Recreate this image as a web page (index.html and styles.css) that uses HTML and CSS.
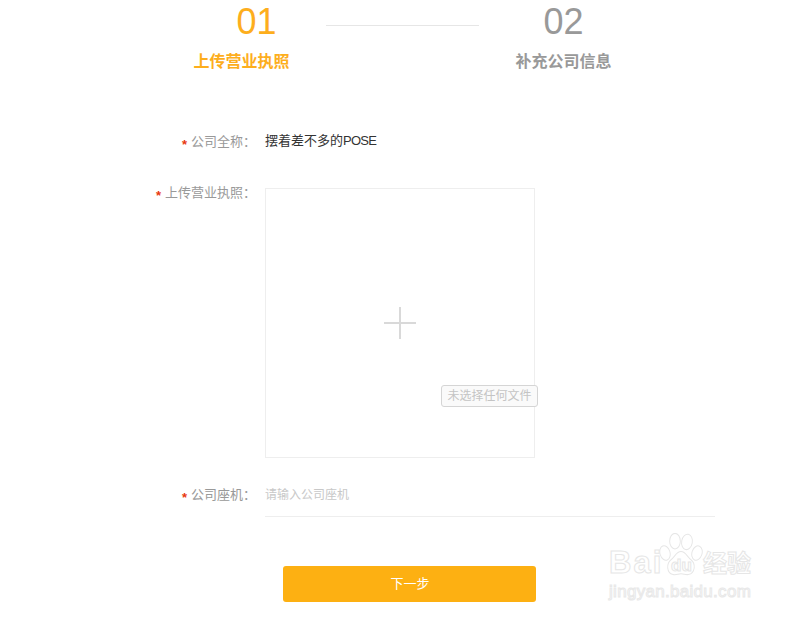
FILE: index.html
```html
<!DOCTYPE html>
<html lang="zh-CN">
<head>
<meta charset="utf-8">
<title>上传营业执照</title>
<link rel="stylesheet" href="styles.css">
</head>
<body>
<div class="page">
  <div class="steps">
    <div class="step step-active">
      <div class="step-num step-num-shift">01</div>
      <div class="step-name">上传营业执照</div>
    </div>
    <div class="step-line"></div>
    <div class="step">
      <div class="step-num">02</div>
      <div class="step-name">补充公司信息</div>
    </div>
  </div>
  <form class="form">
    <div class="row row-name">
      <div class="label"><span class="req">*</span>公司全称：</div>
      <div class="value">摆着差不多的<span class="latin">POSE</span></div>
    </div>
    <div class="row row-upload">
      <div class="label label-up"><span class="req">*</span>上传营业执照：</div>
      <div class="upload">
        <svg class="plus" width="32" height="32" viewBox="0 0 32 32"><path d="M16 0v32M0 16h32" stroke="#d9d9d9" stroke-width="2" fill="none"/></svg>
        <span class="file-btn">未选择任何文件</span>
      </div>
    </div>
    <div class="row row-phone">
      <div class="label"><span class="req">*</span>公司座机：</div>
      <div class="input">请输入公司座机</div>
    </div>
    <button type="button" class="next">下一步</button>
  </form>
</div>
<div class="watermark">
  <div class="wm-top">
    <span class="wm-text">Bai</span>
    <span class="wm-paw">
      <svg width="44" height="46" viewBox="0 0 66 62" preserveAspectRatio="none" fill="#fff" stroke="#e6e6e6" stroke-width="1.4">
        <ellipse cx="9" cy="27" rx="7.5" ry="10" transform="rotate(-20 9 27)"/>
        <ellipse cx="24" cy="11" rx="8" ry="10.5"/>
        <ellipse cx="42" cy="12" rx="8" ry="10.5" transform="rotate(12 42 12)"/>
        <ellipse cx="57" cy="27" rx="7.5" ry="10" transform="rotate(22 57 27)"/>
        <path d="M33 25c7 0 9 7 15 11 7 5 7 18-4 20-4 .6-7-1-11-1s-7 2-12 1c-10-2-10-15-3-20 6-4 8-11 15-11z"/>
      </svg>
      <span class="wm-du">du</span>
    </span>
    <span class="wm-text wm-cn">经验</span>
  </div>
  <div class="wm-url">jingyan.baidu.com</div>
</div>
</body>
</html>
```
FILE: styles.css
```css
* { box-sizing: border-box; }
html, body { margin: 0; padding: 0; background: #fff; }
body {
  width: 795px;
  height: 619px;
  overflow: hidden;
  position: relative;
  font-family: "Liberation Sans", "Noto Sans CJK SC", sans-serif;
  font-size: 13px;
}
.page { display: flex; flex-direction: column; }
.steps { display: flex; align-items: flex-start; padding: 1px 0 0 193px; height: 132px; }
.step { width: 97px; display: flex; flex-direction: column; align-items: center; color: #999; }
.step-active { color: #fdae1d; }
.step-num { font-size: 36px; line-height: 42px; height: 50px; width: 97px; text-align: center; white-space: nowrap; }
.step-num-shift { padding-left: 30px; }
.step-name { font-size: 16px; font-weight: 700; line-height: 22px; white-space: nowrap; }
.step-line { width: 153px; height: 1px; background: #e6e6e6; margin: 24px 36px 0; }
.form { display: flex; flex-direction: column; }
.row { display: flex; align-items: flex-start; }
.label { width: 256px; margin-right: 9px; text-align: right; color: #999; line-height: 20px; white-space: nowrap; flex: none; }
.label-up { margin-top: -5px; height: 20px; }
.req { display: inline-block; color: #e8380d; font-weight: 700; margin-right: 4px; transform: translateY(3px); }
.value { color: #333; line-height: 20px; margin-top: -1px; }
.latin { letter-spacing: -0.75px; }
.row-name { height: 56px; }
.upload { width: 270px; height: 270px; border: 1px solid #eee; position: relative; display: flex; align-items: center; justify-content: center; }
.row-upload { height: 270px; }
.file-btn {
  position: absolute;
  left: 175px;
  top: 196px;
  width: 97px;
  height: 22px;
  border: 1px solid #d5d5d5;
  border-radius: 3px;
  background: #fafafa;
  color: #c4c4c4;
  font-size: 12px;
  line-height: 20px;
  text-align: center;
  white-space: nowrap;
}
.row-phone { height: 59px; padding-top: 27px; }
.input { width: 450px; height: 32px; border-bottom: 1px solid #eee; color: #c8c8c8; font-size: 12px; line-height: 20px; }
.next {
  width: 253px;
  height: 36px;
  margin: 49px 0 0 283px;
  border: 0;
  border-radius: 3px;
  background: #fdb012;
  color: #fff;
  font-family: inherit;
  font-size: 13px;
  padding: 0 0 3px 1px;
}
.watermark { position: absolute; left: 609px; top: 533px; width: 150px; color: #fff; }
.wm-top { display: flex; align-items: flex-end; height: 46px; }
.wm-text { font-size: 31px; line-height: 32px; font-weight: 700; color: #fff; -webkit-text-stroke: 1px #e6e6e6; letter-spacing: 2px; flex: none; width: 50px; }
.wm-cn { font-size: 24px; letter-spacing: 0; line-height: 30px; width: auto; }
.wm-paw { position: relative; width: 43px; height: 46px; flex: none; margin-right: 1px; }
.wm-paw svg { position: absolute; left: 0; top: 0; }
.wm-du { position: absolute; left: 12px; top: 23px; font-size: 17px; font-weight: 700; color: #fff; -webkit-text-stroke: 1px #e6e6e6; line-height: 20px; }
.wm-url { font-size: 17px; line-height: 22px; color: #fff; -webkit-text-stroke: 1px #e8e8e8; white-space: nowrap; margin-top: 2px; letter-spacing: 0.3px; }
```
